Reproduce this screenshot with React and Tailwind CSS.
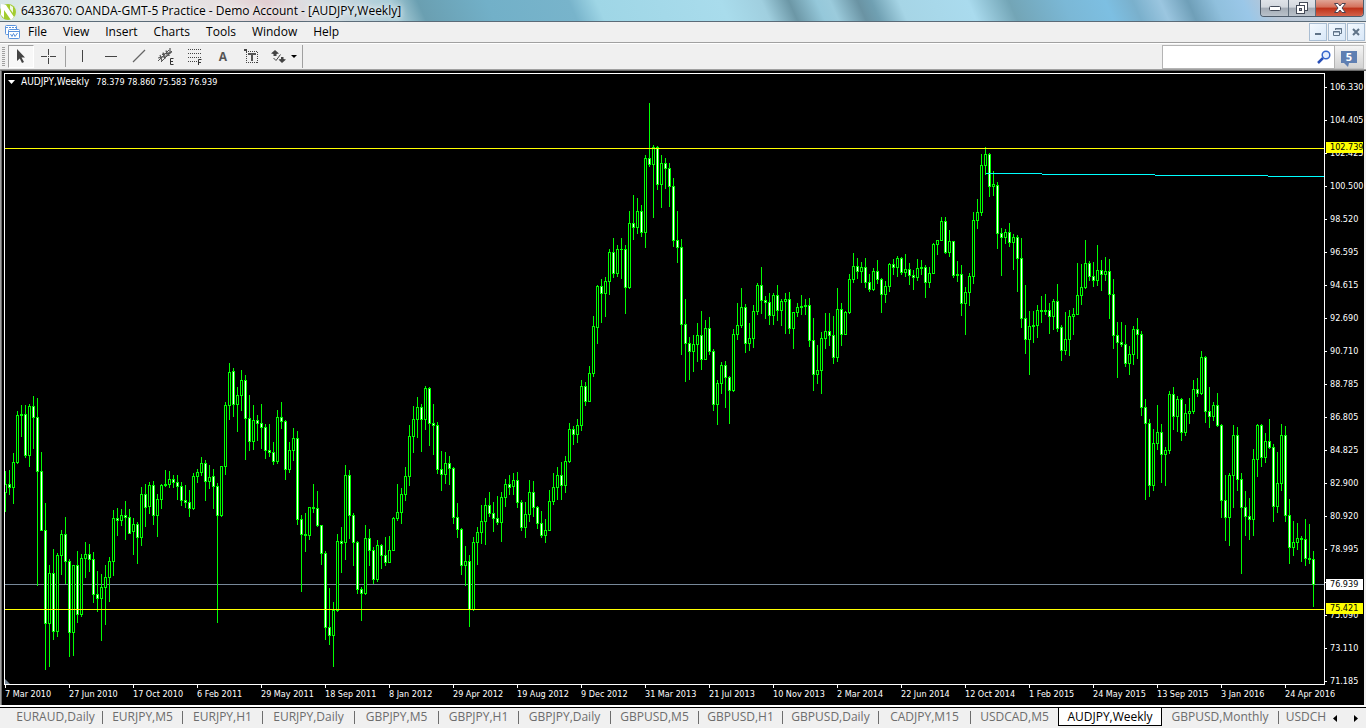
import { useState } from 'react';

// Candles in screen rows: high, body top, body bottom, low, direction (u = up, d = down)
const CANDLES = `
471 484 492 512 u|470 484 487 495 d|453 462 487 504 u|411 415 462 464 u|405 414 415 437 d|405 414 455 458 d|404 406 455 467 u|396 406 417 449 d
398 417 471 586 d|452 471 530 531 d|503 530 623 670 d|565 573 623 667 u|549 573 631 640 d|553 555 631 637 u|530 534 555 575 u|517 534 561 584 d
559 561 632 657 d|565 565 632 656 u|551 565 614 623 d|554 558 614 617 u|542 554 558 578 u|544 554 559 572 d|552 559 594 603 d|571 594 598 612 d
574 587 598 641 u|565 577 587 625 u|557 561 577 602 u|510 518 561 576 u|508 518 520 536 d|509 515 520 526 u|501 515 517 540 d|509 517 533 534 d
518 524 531 555 u|522 524 537 564 d|487 494 537 546 u|484 494 507 527 d|482 485 506 514 u|481 485 515 525 d|494 499 515 537 u|484 485 499 509 u
470 484 485 487 d|471 479 484 488 u|475 479 482 488 d|475 482 486 500 d|482 486 500 506 d|485 500 502 508 d|490 502 508 517 d|473 476 508 510 u
469 472 476 483 u|457 463 472 476 u|460 463 481 501 d|465 477 481 489 u|469 476 486 509 d|483 486 515 623 d|466 466 515 517 u|402 405 466 475 u
363 372 405 420 u|368 371 404 417 d|387 395 404 432 u|370 380 395 411 u|375 380 418 460 d|395 418 441 451 d|405 420 441 450 u|415 420 423 441 d
404 423 427 449 d|424 427 450 459 d|424 450 452 457 d|442 452 461 465 d|410 417 461 464 u|402 417 421 429 d|420 421 469 480 d|442 450 469 473 u
428 438 450 461 u|431 438 519 525 d|515 519 534 592 d|513 534 535 552 d|507 507 535 540 u|484 507 508 513 d|491 508 525 527 d|525 525 553 565 d
551 553 627 640 d|588 627 635 645 d|602 610 635 667 u|534 541 610 612 u|527 541 543 573 d|465 475 542 560 u|470 475 515 539 d|513 515 542 566 d
541 542 589 594 d|587 589 593 621 d|525 538 593 595 u|529 538 550 566 d|547 550 579 584 d|540 545 579 582 u|544 545 555 569 d|537 555 562 566 d
536 550 562 563 u|517 518 550 551 u|484 512 518 521 u|488 494 512 524 u|467 476 494 501 u|425 436 476 486 u|406 419 436 453 u|397 407 419 438 u
404 407 419 452 d|386 388 419 430 u|387 388 423 446 d|404 423 425 455 d|422 425 469 474 d|451 469 474 491 d
452 463 474 484 u|456 463 468 485 d|467 468 517 524 d|503 517 529 538 d|528 529 565 575 d|546 561 565 586 u|555 561 609 627 d|537 542 609 611 u
527 532 542 565 u|505 521 532 544 u|498 505 521 545 u|492 505 513 517 d|502 513 518 532 d|496 518 522 525 d|492 497 522 542 u|479 484 497 507 u
475 484 487 495 d|473 480 486 495 u|472 480 502 508 d|500 502 527 531 d|502 514 527 538 u|480 492 514 522 u|481 492 507 517 d|506 507 523 529 d
511 523 535 538 d|519 530 535 543 u|490 501 530 531 u|473 487 501 505 u|467 475 487 500 u|462 475 485 500 d|456 461 485 493 u|423 429 461 463 u
426 429 434 445 d|419 425 434 443 u|380 386 425 431 u|382 386 401 406 d|366 373 401 402 u|316 326 373 377 u|285 286 327 344 u|279 286 293 323 d
277 281 293 317 u|249 252 281 295 u|238 252 273 278 d|245 249 273 277 u|238 249 249 279 d|245 249 287 314 d|211 223 287 289 u|195 223 227 240 d
198 211 227 234 u|205 211 232 237 d|155 158 232 248 u|103 158 164 167 d|145 147 164 218 u|146 147 184 190 d|155 163 184 208 u|158 163 168 189 d
163 168 186 207 d|178 186 240 247 d|211 240 247 263 d|239 247 324 355 d|299 324 343 382 d|337 343 351 380 d|335 344 351 372 u|323 335 344 362 u
311 335 359 370 d|320 328 359 360 u|317 328 351 355 d|349 351 404 411 d|380 383 404 425 u|362 365 383 394 u|361 365 377 408 d|376 377 390 424 d
329 334 390 392 u|303 325 334 340 u|288 307 325 328 u|304 307 343 353 d|323 338 343 351 u|305 311 338 348 u|283 285 311 315 u|267 285 300 314 d
296 300 302 319 d|293 302 315 325 d|293 295 315 325 u|285 295 310 321 d|299 301 310 326 u|293 299 301 334 u|292 299 328 334 d|312 312 328 349 u
303 307 312 317 u|295 306 307 315 d|299 305 306 315 d|298 305 340 347 d|318 340 374 391 d|345 370 374 384 u|332 338 370 394 u|313 331 338 349 u
313 331 335 346 d|316 335 357 364 d|288 309 357 362 u|303 309 334 346 d|311 312 334 335 u|274 279 312 314 u|253 266 279 283 u|258 266 271 279 d
262 267 271 283 u|258 267 282 288 d|274 282 289 292 d|268 271 289 291 u|260 271 279 284 d|278 279 294 313 d|281 286 294 303 u|263 264 286 292 u
259 264 267 275 d|256 258 267 277 u|257 258 272 275 d|254 269 272 277 u|263 269 275 285 d|270 275 277 290 d|259 268 277 281 u|260 267 268 275 d
265 267 282 298 d|267 273 282 288 u|243 244 273 274 u|240 240 244 255 u|217 221 240 241 u|217 221 252 254 d|230 241 252 257 u|241 241 275 278 d
261 274 275 282 d|265 274 303 316 d|287 292 303 335 u|273 276 292 306 u|212 220 276 284 u|199 212 220 229 u|154 165 212 216 u|147 154 165 175 u
153 154 186 197 d|171 184 186 196 u|182 185 233 249 d|228 233 237 276 d|229 232 237 244 u|223 232 242 247 d|234 237 242 270 u|235 237 258 292 d
238 258 318 328 d|285 318 339 354 d|311 326 339 375 u|311 325 326 343 d|305 310 325 338 u|296 310 311 323 d|294 310 311 315 d|303 310 316 334 d
299 301 316 330 u|284 301 328 332 d|325 327 350 361 d|312 339 350 355 u|310 316 339 356 u|308 314 316 335 u|263 295 314 315 u|264 287 295 305 u
240 263 287 289 u|261 263 276 281 d|262 276 280 287 d|245 270 280 286 u|260 270 274 291 d|257 271 274 281 u|259 271 294 319 d|279 294 335 349 d
322 335 342 378 d|322 342 344 347 d|325 344 363 367 d|346 354 363 375 u|326 329 354 365 u|318 329 334 359 d|331 334 407 416 d|399 407 423 500 d
419 423 485 497 d|429 443 485 491 u|405 432 443 450 u|424 432 454 483 d|447 450 454 486 u|391 394 450 454 u|387 394 416 430 d|396 399 416 432 u
398 399 432 441 d|404 413 432 436 u|398 411 413 424 u|380 389 411 414 u|378 389 393 397 d|351 357 393 395 u|356 357 411 423 d|387 411 416 428 d
402 405 416 421 u|393 405 425 427 d|424 425 500 518 d|475 500 517 541 d|473 475 517 546 u|425 435 475 508 u|427 435 479 491 d|473 479 507 574 d
491 507 516 536 d|498 516 519 540 d|449 459 519 536 u|424 425 459 477 u|424 425 457 467 d|433 441 457 463 u|419 441 447 449 d|444 447 506 522 d
452 483 506 513 u|424 435 483 491 u|426 435 515 522 d|499 515 547 564 d|521 542 547 556 u|523 538 542 550 u|536 538 539 562 d|519 539 558 566 d
524 558 559 564 d|551 559 584 607 d
`;

const candles = CANDLES.trim().split(/[|\n]/).map((row) => {
  const [high, top, bottom, low, dir] = row.split(' ');
  return { high: +high, top: +top, bottom: +bottom, low: +low, down: dir === 'd' };
});

const PLOT_TOP = 74;
const AXIS_TOP = 71;

const PRICES = [
  '106.330', '104.405', '102.425', '100.500', '98.520', '96.595', '94.615', '92.690', '90.710', '88.785',
  '86.805', '84.825', '82.900', '80.920', '78.995', '', '75.090', '73.110', '71.185',
];

const TAGS = [
  { price: '102.739', row: 148, color: 'bg-[#ffff00]' },
  { price: '76.939', row: 585, color: 'bg-white' },
  { price: '75.421', row: 609, color: 'bg-[#ffff00]' },
];

const DATES = [
  '7 Mar 2010', '27 Jun 2010', '17 Oct 2010', '6 Feb 2011', '29 May 2011', '18 Sep 2011', '8 Jan 2012',
  '29 Apr 2012', '19 Aug 2012', '9 Dec 2012', '31 Mar 2013', '21 Jul 2013', '10 Nov 2013', '2 Mar 2014',
  '22 Jun 2014', '12 Oct 2014', '1 Feb 2015', '24 May 2015', '13 Sep 2015', '3 Jan 2016', '24 Apr 2016',
];

const TABS = [
  { name: 'EURAUD,Daily', width: 'w-[98px] pl-1' },
  { name: 'EURJPY,M5', width: 'w-[80px]' },
  { name: 'EURJPY,H1', width: 'w-[80px]' },
  { name: 'EURJPY,Daily', width: 'w-[92px]' },
  { name: 'GBPJPY,M5', width: 'w-[84px]' },
  { name: 'GBPJPY,H1', width: 'w-[80px]' },
  { name: 'GBPJPY,Daily', width: 'w-[92px]' },
  { name: 'GBPUSD,M5', width: 'w-[88px]' },
  { name: 'GBPUSD,H1', width: 'w-[84px]' },
  { name: 'GBPUSD,Daily', width: 'w-[96px]' },
  { name: 'CADJPY,M15', width: 'w-[92px]' },
  { name: 'USDCAD,M5', width: 'w-[87px]' },
  { name: 'AUDJPY,Weekly', width: 'w-[104px]' },
  { name: 'GBPUSD,Monthly', width: 'w-[117px]' },
  { name: 'USDCH', width: 'w-[50px] pl-1' },
];

const MENU = ['File', 'View', 'Insert', 'Charts', 'Tools', 'Window', 'Help'];

function TitleBar() {
  return (
    <header className="flex h-[22px] shrink-0 items-start justify-between border-b border-[#5b6b78] bg-[linear-gradient(66deg,#d6e6e6_0%,#e4e9ea_8%,#e6dfe0_17%,#e2cfd2_20%,#dcdfe2_23%,#b9d2dc_27%,#a9cdd8_29%,#6a9fb1_31%,#72b0c8_36%,#78b4cb_42%,#9fd6e6_44%,#a9dcec_53%,#a0cfdf_56%,#6c97a6_58%,#95c8da_60%,#9bcbdc_61%,#6a93a3_63%,#70a0b2_64%,#a6d5e6_66%,#aadbee_71%,#73a5b6_74%,#7bb8d6_78%,#7dbfe2_81%,#7ab0cc_83%,#9bc6e0_85%,#6f9fb8_87%,#90c0dd_89%,#9ac7e8_91%,#b9c6d6_93%,#c8d8e4_100%)]">
      <div className="flex h-full items-center gap-[5px]">
        <svg width="16" height="18" viewBox="0 0 16 18">
          <circle cx="8" cy="10" r="8" fill="#a2cc2e" />
          <path d="M1 2 L6 3 L14 15 L11 18 L4 8 L4 16 L1 13 Z" fill="#fff" />
          <path d="M10 3 L13 5 L13 11 L10 7 Z" fill="#f0f8e4" />
        </svg>
        <h1 className="whitespace-nowrap text-[12px] leading-[20px] text-black [text-shadow:0_0_5px_#fff,0_0_8px_#fff]">
          6433670: OANDA-GMT-5 Practice - Demo Account - [AUDJPY,Weekly]
        </h1>
      </div>
      <div className="mr-[2px] flex h-[17px] overflow-hidden rounded-b-[4px] border border-t-0 border-[#4e5c6b]">
        <button aria-label="Minimize" className="flex w-[28px] items-center justify-center border-r border-[#5f6d7b] bg-[linear-gradient(#dfe3e8_0%,#d2d7de_45%,#a3abb5_50%,#b9c1ca_100%)]">
          <svg width="12" height="5" viewBox="0 0 12 5"><rect x=".5" y=".5" width="11" height="4" rx="1" fill="#fff" stroke="#444b59" /></svg>
        </button>
        <button aria-label="Restore" className="flex w-[27px] items-center justify-center border-r border-[#5f6d7b] bg-[linear-gradient(#dfe3e8_0%,#d2d7de_45%,#a3abb5_50%,#b9c1ca_100%)]">
          <svg width="12" height="12" viewBox="0 0 12 12">
            <rect x="3.5" y=".5" width="8" height="8" fill="#fff" stroke="#444b59" />
            <rect x=".5" y="3.5" width="8" height="8" fill="#fff" stroke="#444b59" />
            <rect x="3.5" y="6.5" width="2" height="2" fill="#aab" stroke="#444b59" />
          </svg>
        </button>
        <button aria-label="Close" className="flex w-[47px] items-center justify-center bg-[linear-gradient(#e0a595_0%,#d4705a_45%,#bd3118_50%,#d4624a_100%)]">
          <svg width="12" height="10" viewBox="0 0 12 10">
            <path d="M.5 .5 H4 L6 3 L8 .5 H11.5 L8 5 L11.5 9.5 H8 L6 7 L4 9.5 H.5 L4 5 Z" fill="#fff" stroke="#4a4250" />
          </svg>
        </button>
      </div>
    </header>
  );
}

function MenuBar() {
  const mdi = 'flex size-[18px] items-center justify-center border border-[#a9bdd2] bg-[linear-gradient(135deg,#f4f9ff,#d9e8f8)]';
  return (
    <nav className="flex h-[21px] shrink-0 items-center justify-between border-b border-[#a0a0a0] bg-[#f0f0f0] pr-px">
      <div className="flex items-center">
        <svg className="ml-[5px] mr-[1px]" width="15" height="14" viewBox="0 0 15 14" fill="none" stroke="#5b93dc">
          <rect x=".5" y=".5" width="11" height="9" rx="1" fill="#fff" />
          <path d="M1 2.5 H11" stroke="#5b93dc" strokeDasharray="2 1" />
          <rect x="3.5" y="4.5" width="11" height="9" rx="1" fill="#fff" />
          <path d="M4 6.5 H14" />
          <path d="M5.5 9 L7 11.5 L8.5 8.5 L10 11.5 L12.5 8" />
        </svg>
        {MENU.map((item) => (
          <button key={item} className="px-[8px] text-[12px] leading-[20px] text-black first-of-type:pl-[7px]">{item}</button>
        ))}
      </div>
      <div className="flex gap-px">
        <button aria-label="Minimize chart" className={mdi}>
          <svg width="8" height="8"><rect x="1" y="5" width="6" height="2" fill="#5f7388" /></svg>
        </button>
        <button aria-label="Restore chart" className={mdi}>
          <svg width="9" height="8" fill="none" stroke="#5f7388">
            <path d="M2.5 2 V.5 H8.5 V5.5 H6.5 M2 1 H9" />
            <path d="M.5 3.5 H6.5 V7.5 H.5 Z M0 4 H7" />
          </svg>
        </button>
        <button aria-label="Close chart" className={mdi}>
          <svg width="8" height="8" stroke="#5f7388" strokeWidth="2"><path d="M1 1 L7 7 M7 1 L1 7" /></svg>
        </button>
      </div>
    </nav>
  );
}

const TOOLS = [
  { label: 'Vertical line', icon: <path d="M8.5 2 V14" stroke="#444" /> },
  { label: 'Horizontal line', icon: <path d="M3 8.5 H15" stroke="#444" /> },
  { label: 'Trendline', icon: <path d="M3 14 L15 2" stroke="#666" strokeWidth="1.2" /> },
  {
    label: 'Equidistant channel',
    icon: (
      <>
        <path d="M0 13 L11 2 M3 14 L14 3" stroke="#555" />
        <path d="M2 7 L4 13 M5 4.5 L7 11 M8 2.5 L9.5 8 M12 0 L12 6 M0 10 L12 7 M4 6.5 L14 4" stroke="#555" strokeWidth="1.2" />
        <path d="M15.5 10.5 H12.5 V16.5 H15.5 M12.5 13.5 H15" stroke="#333" />
      </>
    ),
  },
  {
    label: 'Fibonacci retracement',
    icon: (
      <>
        <path d="M2 1.5 H16 M2 5.5 H16 M2 9.5 H16 M2 13.5 H11" stroke="#444" strokeDasharray="1 1" />
        <path d="M15.5 11.5 H12.5 V17 M12.5 14.5 H15" stroke="#333" />
      </>
    ),
  },
  { label: 'Text', text: 'A' },
  {
    label: 'Text label',
    icon: (
      <>
        <path d="M4 3.5 H16 M4 14.5 H16 M4.5 4 V15 M15.5 4 V15" stroke="#444" strokeDasharray="1 1" />
        <path d="M2 1 H5 V3 H2 Z" fill="#444" />
        <path d="M6 5 H14 V7 H11 V13 H9 V7 H6 Z" fill="#555" />
      </>
    ),
  },
];

function Toolbar() {
  const [query, setQuery] = useState('');
  return (
    <div className="flex h-[27px] shrink-0 items-center justify-between border-b border-t border-b-[#a0a0a0] border-t-white bg-[#f0f0f0] pr-[2px]">
      <div className="flex h-full items-center">
        <div className="ml-[2px] mr-[3px] h-[19px] w-[3px] bg-[repeating-linear-gradient(#a0a0a0_0_1px,#f0f0f0_1px_2px)]" />
        <button aria-label="Cursor" className="flex h-[23px] w-[26px] items-center justify-center border border-b-white border-l-[#a0a0a0] border-r-white border-t-[#a0a0a0] bg-[#f8f8f8]">
          <svg width="10" height="15" viewBox="0 0 10 15"><path d="M1 0 L9 8.5 L5.5 8.5 L8 13 L6 14 L3.8 9.5 L1 12 Z" fill="#444" /></svg>
        </button>
        <button aria-label="Crosshair" className="flex h-[23px] w-[30px] items-center justify-center">
          <svg width="16" height="16" stroke="#444"><path d="M7.5 0 V6 M7.5 9 V15 M0 7.5 H6 M9 7.5 H15" /><path d="M7 7.5 H8" /></svg>
        </button>
        <div className="ml-px mr-[3px] h-[21px] w-px bg-[#a0a0a0]" />
        {TOOLS.map((tool) => (
          <button key={tool.label} aria-label={tool.label} className="flex h-[23px] w-[28px] items-center justify-center text-[12px] font-bold text-[#555]">
            {tool.text ?? <svg width="18" height="18" fill="none">{tool.icon}</svg>}
          </button>
        ))}
        <button aria-label="Arrows" className="flex h-[23px] w-[38px] items-center justify-center gap-[5px] border-r border-[#a0a0a0]">
          <svg width="15" height="13" viewBox="0 0 15 13" fill="#444">
            <path d="M4 0 L8 3.5 L5.5 4 V6 H2.5 V4 L0 3.5 Z M10 7 H12.500 V9 L15 9.500 L11 13 L7.500 9.500 L10 9 Z" />
            <path d="M2.500 8 L5 10.500 L9.500 4.500" fill="none" stroke="#444" />
          </svg>
          <svg width="6" height="3"><path d="M0 0 H6 L3 3 Z" fill="#000" /></svg>
        </button>
      </div>
      <div className="flex h-[24px]">
        <label className="flex w-[173px] items-center border border-[#b4b4b4] bg-white pr-[3px]">
          <input aria-label="Search" value={query} onChange={(e) => setQuery(e.target.value)} className="min-w-0 flex-1 px-1 text-[12px] outline-none" />
          <svg width="14" height="14" viewBox="0 0 14 14" fill="none">
            <path d="M1 13 L6 8" stroke="#2a50b8" strokeWidth="2.5" />
            <circle cx="9" cy="5" r="3.8" fill="#e6effc" stroke="#3565cc" strokeWidth="1.5" />
          </svg>
        </label>
        <button aria-label="5 messages" className="flex w-[29px] items-center justify-center border border-l-0 border-[#c0c0c0] bg-[linear-gradient(#f4f4f4,#d2d2d2)]">
          <span className="relative flex h-[12px] w-[16px] items-center justify-center bg-[#5f7fb2] text-[11px] font-bold leading-[12px] text-white">
            5
            <svg className="absolute left-[3px] top-[12px]" width="5" height="4"><path d="M0 0 H5 L4 4 Z" fill="#5f7fb2" /></svg>
          </span>
        </button>
      </div>
    </div>
  );
}

function Candle({ candle, x }) {
  const { high, top, bottom, low, down } = candle;
  return (
    <g fill="#00ff00">
      <rect x={x} y={high - PLOT_TOP} width="1" height={low - high} />
      <rect x={x - 1} y={top - PLOT_TOP} width="3" height={bottom - top + 1} />
      {bottom - top > 1 && (
        <rect x={x} y={top + 1 - PLOT_TOP} width="1" height={bottom - top - 1} fill={down ? '#fff' : '#000'} />
      )}
    </g>
  );
}

function Plot() {
  return (
    <div className="relative min-h-0 flex-1 border border-white">
      <svg className="absolute inset-0 size-full" shapeRendering="crispEdges">
        {/* bid line */}
        <rect x="0" y="510" width="100%" height="1" fill="#778899" />
        {candles.map((candle, i) => <Candle key={i} candle={candle} x={i * 4} />)}
        {/* trend line */}
        <g fill="#00ffff">
          <rect x="981" y="99" width="56" height="1" />
          <rect x="1037" y="100" width="113" height="1" />
          <rect x="1150" y="101" width="113" height="1" />
          <rect x="1263" y="102" width="100%" height="1" />
        </g>
        {/* horizontal levels */}
        <rect x="0" y="74" width="100%" height="1" fill="#ffff00" />
        <rect x="0" y="535" width="100%" height="1" fill="#ffff00" />
      </svg>
      <svg className="absolute bottom-0 left-0" width="5" height="5"><path d="M0 0 L5 5 H0 Z" fill="#778899" /></svg>
      <p className="absolute left-[3px] top-[2px] flex items-center leading-[12px] text-white">
        <svg className="mr-[6px]" width="7" height="4"><path d="M0 0 H7 L3.5 4 Z" fill="#fff" /></svg>
        <span className="mr-[7px] text-[10px]">AUDJPY,Weekly</span>
        <span className="text-[9px]">78.379 78.860 75.583 76.939</span>
      </p>
    </div>
  );
}

function Chart() {
  return (
    <main className="flex min-h-0 flex-1 border-l border-t border-l-[#a0a0a0] border-t-[#696969] bg-black font-['DejaVu_Sans_Condensed','Noto_Sans',sans-serif]">
      <div className="flex min-w-0 flex-1 flex-col border-l border-[#696969] pl-[2px] pt-[2px]">
        <Plot />
        <div className="flex h-[20px] w-full pl-px">
          {DATES.map((date) => (
            <div key={date} className="w-[64px] shrink-0 whitespace-nowrap text-[9px] leading-[12px] text-white">
              <div className="h-[3px] w-px bg-white" />
              {date}
            </div>
          ))}
        </div>
      </div>
      <div className="relative w-[39px] shrink-0 text-[9px] text-white">
        {PRICES.map((price, i) => (
          <div key={i} className="flex h-[33px] items-center gap-[3px]">
            <span className="h-px w-[2px] shrink-0 bg-white" />
            {price}
          </div>
        ))}
        {TAGS.map((tag) => (
          <div
            key={tag.price}
            className={`absolute left-px w-[37px] pl-[4px] leading-[11px] text-black ${tag.color}`}
            style={{ top: tag.row - AXIS_TOP - 6 }}
          >
            {tag.price}
          </div>
        ))}
      </div>
      <div className="w-[2px] shrink-0 bg-[#f0f0f0]" />
    </main>
  );
}

function ChartTabs() {
  const [active, setActive] = useState('AUDJPY,Weekly');
  return (
    <footer className="flex h-[23px] shrink-0 items-start border-t-2 border-white bg-[#f0f0f0]">
      <div className="flex h-[21px] min-w-0 flex-1 overflow-hidden border-t border-black pl-[5px]">
        {TABS.map((tab) => {
          const on = tab.name === active;
          return (
            <button
              key={tab.name}
              onClick={() => setActive(tab.name)}
              className={`flex h-[18px] shrink-0 items-center justify-center whitespace-nowrap text-[12px] ${tab.width} ${
                on ? 'border border-t-0 border-black bg-white text-black' : 'text-[#6d6d6d]'
              }`}
            >
              <span className="flex-1">{tab.name}</span>
              {!on && tab.name !== 'USDCH' && tab.name !== 'USDCAD,M5' && <span className="h-[13px] w-px bg-[#6d6d6d]" />}
            </button>
          );
        })}
      </div>
      <div className="flex h-[21px] w-[38px] items-center gap-[9px] border-t border-black">
        <button aria-label="Scroll left" className="flex w-[14px] justify-center">
          <svg width="4" height="7"><path d="M4 0 V7 L0 3.5 Z" /></svg>
        </button>
        <button aria-label="Scroll right" className="flex w-[9px] justify-center">
          <svg width="4" height="7"><path d="M0 0 V7 L4 3.5 Z" /></svg>
        </button>
      </div>
    </footer>
  );
}

export default function App() {
  return (
    <div className="flex h-screen flex-col overflow-hidden bg-[#f0f0f0] font-['Open_Sans','Noto_Sans',sans-serif]">
      <TitleBar />
      <MenuBar />
      <Toolbar />
      <Chart />
      <ChartTabs />
    </div>
  );
}
